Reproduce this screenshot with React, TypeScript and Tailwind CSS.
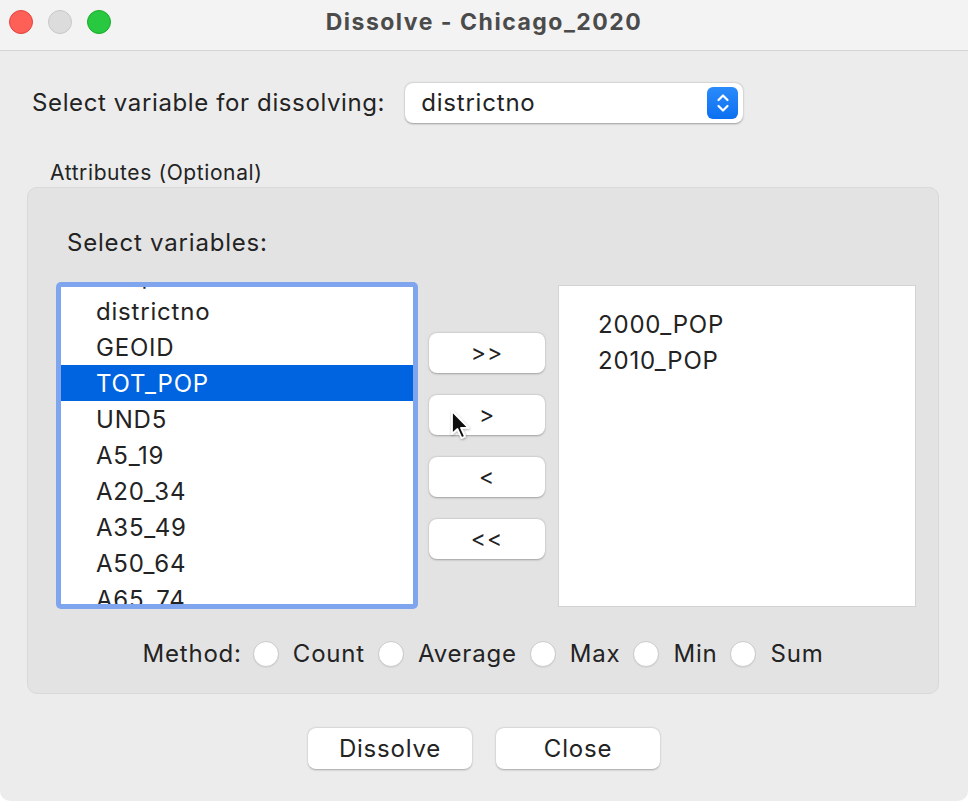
import React from "react";

const leftItems = ["districtno", "GEOID", "TOT_POP", "UND5", "A5_19", "A20_34", "A35_49", "A50_64", "A65_74"];

function Radio({ label, last }: { label: string; last?: boolean }) {
  return (
    <div className="flex items-center">
      <div className="w-[26px] h-[26px] rounded-full bg-white border border-[#cacaca] shadow-[0_1px_1px_rgba(0,0,0,0.06)]" />
      <span className={`ml-[14px] ${last ? "" : "mr-[13px]"}`}>{label}</span>
    </div>
  );
}

function ArrowButton({ label }: { label: string }) {
  return (
    <div className="w-[116px] h-[40px] rounded-[8px] bg-white shadow-[0_0.5px_2px_rgba(0,0,0,0.3)] flex items-center justify-center text-[23px] tracking-[1px] text-[#222]">
      {label}
    </div>
  );
}

export default function App() {
  return (
    <div
      className="w-[968px] h-[801px] bg-[#ececec] text-[#232323] overflow-hidden rounded-b-[10px] relative text-[24px] tracking-[0.8px] leading-[30px]"
      style={{ fontFamily: "Inter, 'Liberation Sans', sans-serif" }}
    >
      {/* Title bar */}
      <div className="h-[51px] bg-[#f3f3f3] border-b border-[#d4d4d4] relative flex items-start pt-[10px] pl-[9px]">
        <div className="flex gap-[15px]">
          <div className="w-[24px] h-[24px] rounded-full bg-[#fe5f57] border border-[#e0443e]" />
          <div className="w-[24px] h-[24px] rounded-full bg-[#dcdcdc] border border-[#c8c8c8]" />
          <div className="w-[24px] h-[24px] rounded-full bg-[#28c840] border border-[#1aab29]" />
        </div>
        <div className="absolute left-0 right-0 top-[7px] h-[30px] flex items-center justify-center text-[23px] tracking-[1.5px] font-bold text-[#4b4b4b] pointer-events-none">
          Dissolve - Chicago_2020
        </div>
      </div>

      {/* Dissolve variable row */}
      <div className="flex items-center mt-[32px] pl-[32px]">
        <span className="tracking-[0.62px]">Select variable for dissolving:</span>
        <div className="ml-[20px] w-[338px] h-[40px] rounded-[8px] bg-white shadow-[0_0.5px_2px_rgba(0,0,0,0.35)] flex items-center justify-between pl-[16px] pr-[5px]">
          <span>districtno</span>
          <div className="w-[31px] h-[32px] rounded-[6px] bg-gradient-to-b from-[#2a8bfb] to-[#0a6ff0] flex items-center justify-center">
            <svg width="14" height="22" viewBox="0 0 14 22" fill="none" stroke="white" strokeWidth="2.2" strokeLinecap="round" strokeLinejoin="round">
              <path d="M2.5 8 L7 3.5 L11.5 8" />
              <path d="M2.5 14 L7 18.5 L11.5 14" />
            </svg>
          </div>
        </div>
      </div>

      <div className="mt-[39px] pl-[50px] text-[21px] tracking-[0.6px] leading-[22px]">Attributes (Optional)</div>

      {/* Group box */}
      <div className="mt-[3px] ml-[27px] w-[912px] h-[507px] rounded-[10px] bg-[#e3e3e3] border border-[#d9d9d9] flex flex-col">
        <div className="mt-[43px] pl-[39px] leading-[24px]">Select variables:</div>

        <div className="flex mt-[27px] pl-[28px] items-start">
          {/* Left list */}
          <div className="w-[362px] h-[327px] rounded-[5px] bg-[#7ea5ee] p-[5px]">
            <div className="w-full h-full bg-white overflow-hidden">
              <div className="mt-[-30px]">
                {["Shape_Area", ...leftItems].map((it) => (
                  <div
                    key={it}
                    className={`h-[36px] flex items-center pl-[35px] pt-[2px] ${it === "TOT_POP" ? "bg-[#0064e1] text-white" : ""}`}
                  >
                    {it}
                  </div>
                ))}
              </div>
            </div>
          </div>

          {/* Buttons */}
          <div className="ml-[11px] mt-[51px] flex flex-col gap-[22px]">
            <ArrowButton label=">>" />
            <ArrowButton label=">" />
            <ArrowButton label="<" />
            <ArrowButton label="<<" />
          </div>

          {/* Right list */}
          <div className="ml-[13px] mt-[3px] w-[358px] h-[322px] bg-white border border-[#d3d3d3] pt-[21px]">
            {["2000_POP", "2010_POP"].map((it) => (
              <div key={it} className="h-[36px] flex items-center pl-[39px]">
                {it}
              </div>
            ))}
          </div>
        </div>

        <div className="mt-[31px] h-[28px] flex items-center justify-center">
          <span className="mr-[11px]">Method:</span>
          <Radio label="Count" />
          <Radio label="Average" />
          <Radio label="Max" />
          <Radio label="Min" />
          <Radio label="Sum" last />
        </div>
      </div>

      {/* Bottom buttons */}
      <div className="mt-[34px] flex justify-center gap-[24px]">
        <div className="w-[164px] h-[41px] rounded-[8px] bg-white shadow-[0_0.5px_2px_rgba(0,0,0,0.3)] flex items-center justify-center">
          Dissolve
        </div>
        <div className="w-[164px] h-[41px] rounded-[8px] bg-white shadow-[0_0.5px_2px_rgba(0,0,0,0.3)] flex items-center justify-center">
          Close
        </div>
      </div>

      {/* Mouse cursor overlay */}
      <svg className="absolute left-[449px] top-[409px]" width="26" height="34" viewBox="0 0 26 34">
        <defs>
          <filter id="sh" x="-30%" y="-30%" width="160%" height="160%">
            <feDropShadow dx="0.5" dy="1" stdDeviation="1" floodColor="#000" floodOpacity="0.35" />
          </filter>
        </defs>
        <path d="M3 2 L3 25 L8.5 20 L12.5 29 L16 27.5 L12 18.8 L19.5 18.8 Z" fill="#111" stroke="white" strokeWidth="1.8" strokeLinejoin="round" filter="url(#sh)" />
      </svg>
    </div>
  );
}
